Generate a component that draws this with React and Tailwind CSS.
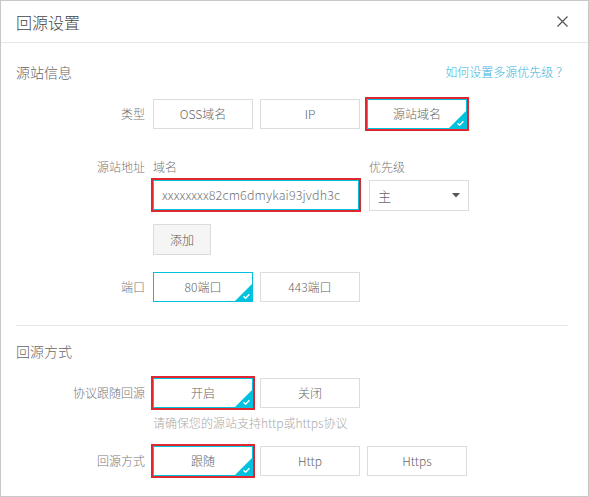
import React from 'react';

const FONT = { fontFamily: '"Noto Sans CJK SC", "Noto Sans", sans-serif' };

function Corner() {
  return (
    <svg className="absolute right-0 bottom-0" width="17" height="17" viewBox="0 0 17 17">
      <polygon points="17,0 17,17 0,17" fill="#00c1de" />
      <path d="M8.5 12.2 L10.6 14.2 L14.4 10.2" fill="none" stroke="#fff" strokeWidth="1.4" />
    </svg>
  );
}

function Opt({ children, selected, marked, w = 'w-[100px]' }) {
  return (
    <div
      className={`relative ${w} h-[30px] flex items-center justify-center text-[12px] text-[#666] bg-white border ${
        selected ? 'border-[#00c1de]' : 'border-[#dcdcdc]'
      }`}
    >
      {children}
      {selected && <Corner />}
      {marked && <div className="absolute -inset-[3px] border-2 border-[#e0262e]" />}
    </div>
  );
}

function Row({ label, children, className = '' }) {
  return (
    <div className={`flex items-center ${className}`}>
      <div className="w-[129px] text-right text-[12px] text-[#777] shrink-0">{label}</div>
      <div className="ml-2 flex gap-[7px]">{children}</div>
    </div>
  );
}

export default function App() {
  return (
    <div className="w-[589px] h-[497px] border border-[#c8c8c8] bg-white font-light" style={FONT}>
      {/* Header */}
      <div className="h-[42px] border-b border-[#e6e6e6] flex items-center justify-between pl-[15px] pr-[20px]">
        <span className="text-[16px] text-[#444]">回源设置</span>
        <svg width="11" height="11" viewBox="0 0 11 11">
          <path d="M0.5 0.5 L10.5 10.5 M10.5 0.5 L0.5 10.5" stroke="#555" strokeWidth="1.2" />
        </svg>
      </div>

      <div className="px-[15px]">
        {/* 源站信息 */}
        <div className="mt-[19px] h-[20px] flex items-center justify-between pr-[5px]">
          <span className="text-[14px] text-[#666]">源站信息</span>
          <span className="text-[12px] text-[#3ab4da]">如何设置多源优先级 ？</span>
        </div>

        <Row label="类型" className="mt-[17px]">
          <Opt>OSS域名</Opt>
          <Opt>IP</Opt>
          <Opt selected marked>源站域名</Opt>
        </Row>

        <div className="flex mt-[28px]">
          <div className="w-[129px] h-[20px] leading-[20px] text-right text-[12px] text-[#777] shrink-0">源站地址</div>
          <div className="ml-2">
            <div className="flex h-[20px] items-center text-[12px] text-[#777]">
              <span className="w-[216px]">域名</span>
              <span>优先级</span>
            </div>
            <div className="flex mt-[3px] gap-[10px]">
              <div className="relative w-[206px] h-[30px] border border-[#00c1de] flex items-center pl-[8px] text-[12.5px] text-[#777] tracking-[0.1px]">
                xxxxxxxx82cm6dmykai93jvdh3c
                <div className="absolute -inset-[3px] border-2 border-[#e0262e]" />
              </div>
              <div className="w-[100px] h-[31px] border border-[#dcdcdc] flex items-center justify-between pl-[8px] pr-[8px] text-[13px] text-[#666]">
                <span>主</span>
                <svg width="8" height="5" viewBox="0 0 8 5">
                  <polygon points="0,0 8,0 4,4.5" fill="#555" />
                </svg>
              </div>
            </div>
            <div className="mt-[13px] w-[58px] h-[31px] bg-[#f5f5f5] border border-[#dcdcdc] flex items-center justify-center text-[12px] text-[#555]">
              添加
            </div>
          </div>
        </div>

        <Row label="端口" className="mt-[17px]">
          <Opt selected>80端口</Opt>
          <Opt>443端口</Opt>
        </Row>

        <div className="mt-[23px] mr-[5px] border-t border-[#e6e6e6]" />

        {/* 回源方式 */}
        <div className="mt-[15px] h-[20px] flex items-center">
          <span className="text-[14px] text-[#666]">回源方式</span>
        </div>

        <Row label="协议跟随回源" className="mt-[17px]">
          <Opt selected marked>开启</Opt>
          <Opt>关闭</Opt>
        </Row>
        <div className="ml-[137px] mt-[6px] h-[18px] leading-[18px] text-[12px] text-[#aaa]">
          请确保您的源站支持http或https协议
        </div>

        <Row label="回源方式" className="mt-[14px]">
          <Opt selected marked>跟随</Opt>
          <Opt>Http</Opt>
          <Opt>Https</Opt>
        </Row>
      </div>
    </div>
  );
}
